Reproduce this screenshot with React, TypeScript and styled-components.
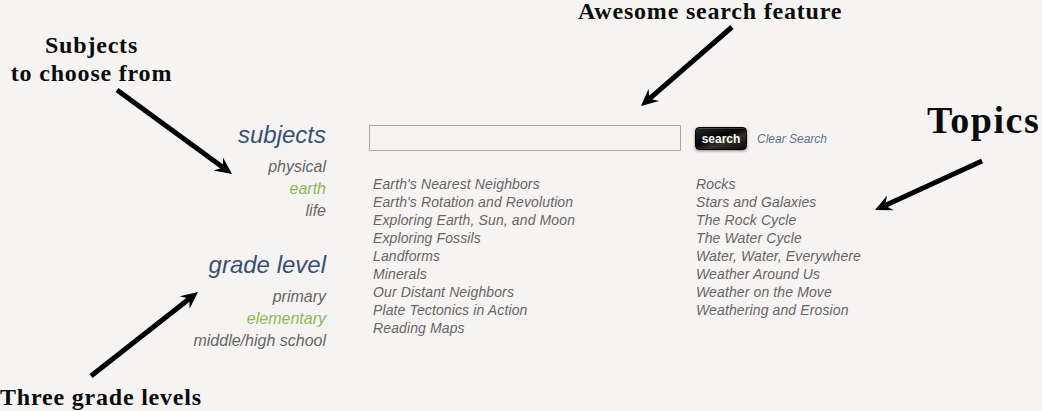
import React from "react";
import styled, { createGlobalStyle } from "styled-components";

const Global = createGlobalStyle`
  html, body { margin: 0; padding: 0; background: #f5f4f2; }
  body { width: 1042px; height: 411px; overflow: hidden; }
`;

const Page = styled.div`
  position: relative;
  width: 1042px;
  height: 411px;
  overflow: hidden;
  box-sizing: border-box;
  padding: 121px 0 0 126px;
  display: flex;
  gap: 43px;
  font-family: "Liberation Sans", Arial, sans-serif;
`;

const Sidebar = styled.nav`
  width: 200px;
  display: flex;
  flex-direction: column;
  align-items: flex-end;
`;

const Heading = styled.h2<{ $gap?: number }>`
  margin: ${(p) => p.$gap ?? 0}px 0 7px;
  font-size: 24px;
  line-height: 28px;
  font-style: italic;
  font-weight: normal;
  color: #3a5073;
`;

const FilterList = styled.ul`
  list-style: none;
  margin: 0;
  padding: 0;
  text-align: right;
`;

const FilterItem = styled.li<{ $active?: boolean }>`
  font-size: 16px;
  line-height: 22px;
  font-style: italic;
  color: ${(p) => (p.$active ? "#8cba55" : "#686565")};
`;

const Main = styled.main`
  padding-top: 4px;
  display: flex;
  flex-direction: column;
`;

const SearchRow = styled.div`
  display: flex;
  align-items: center;
  height: 26px;
`;

const SearchInput = styled.input`
  box-sizing: border-box;
  width: 312px;
  height: 26px;
  border: 1px solid #a8a7a5;
  background: transparent;
  margin: 0 14px 0 0;
  padding: 0 4px;
  outline: none;
`;

const SearchButton = styled.button`
  box-sizing: border-box;
  width: 52px;
  height: 23px;
  margin: 1px 10px 0 0;
  border: 1px solid #000;
  border-radius: 4px;
  background: linear-gradient(160deg, #262626 0%, #050505 45%, #34312e 62%, #0a0a0a 100%);
  box-shadow: 0 1px 3px rgba(0, 0, 0, 0.45), inset 0 1px 0 rgba(255, 255, 255, 0.18);
  color: #fff;
  font-family: "Liberation Sans", Arial, sans-serif;
  font-weight: bold;
  font-size: 12px;
  padding: 0;
  cursor: pointer;
`;

const ClearLink = styled.a`
  font-size: 12px;
  font-style: italic;
  color: #5d7291;
  text-decoration: none;
  margin-top: 1px;
`;

const TopicGrid = styled.div`
  margin-top: 24px;
  padding-left: 4px;
  display: grid;
  grid-template-columns: 323px auto;
`;

const TopicList = styled.ul`
  list-style: none;
  margin: 0;
  padding: 0;
`;

const Topic = styled.li`
  font-size: 14px;
  line-height: 18px;
  font-style: italic;
  letter-spacing: 0.12px;
  color: #6a6464;
  white-space: nowrap;
`;

const Note = styled.div<{ $size?: number; $spacing?: number }>`
  position: absolute;
  font-family: "Liberation Serif", "Times New Roman", serif;
  font-weight: bold;
  color: #0c0c0c;
  font-size: ${(p) => p.$size ?? 24}px;
  line-height: ${(p) => (p.$size ?? 24) + 4}px;
  letter-spacing: ${(p) => p.$spacing ?? 0.8}px;
  text-align: center;
  white-space: nowrap;
`;

const Overlay = styled.svg`
  position: absolute;
  left: 0;
  top: 0;
  pointer-events: none;
`;

type ArrowProps = { x1: number; y1: number; x2: number; y2: number };

const Arrow = ({ x1, y1, x2, y2 }: ArrowProps) => {
  const dx = x2 - x1;
  const dy = y2 - y1;
  const len = Math.hypot(dx, dy);
  const ux = dx / len;
  const uy = dy / len;
  const nx = -uy;
  const ny = ux;
  const head = 17;
  const half = 8;
  const notch = 11;
  const bx = x2 - ux * head;
  const by = y2 - uy * head;
  const mx = x2 - ux * notch;
  const my = y2 - uy * notch;
  const pts = [
    [x2, y2],
    [bx + nx * half, by + ny * half],
    [mx, my],
    [bx - nx * half, by - ny * half],
  ]
    .map((p) => p.map((v) => v.toFixed(1)).join(","))
    .join(" ");
  return (
    <g>
      <line x1={x1} y1={y1} x2={mx} y2={my} stroke="#000" strokeWidth={5} />
      <polygon points={pts} fill="#000" />
    </g>
  );
};

const subjects = [
  { label: "physical" },
  { label: "earth", active: true },
  { label: "life" },
];

const grades = [
  { label: "primary" },
  { label: "elementary", active: true },
  { label: "middle/high school" },
];

const topicsLeft = [
  "Earth's Nearest Neighbors",
  "Earth's Rotation and Revolution",
  "Exploring Earth, Sun, and Moon",
  "Exploring Fossils",
  "Landforms",
  "Minerals",
  "Our Distant Neighbors",
  "Plate Tectonics in Action",
  "Reading Maps",
];

const topicsRight = [
  "Rocks",
  "Stars and Galaxies",
  "The Rock Cycle",
  "The Water Cycle",
  "Water, Water, Everywhere",
  "Weather Around Us",
  "Weather on the Move",
  "Weathering and Erosion",
];

export default function App() {
  return (
    <>
      <Global />
      <Page>
        <Sidebar>
          <Heading>subjects</Heading>
          <FilterList>
            {subjects.map((s) => (
              <FilterItem key={s.label} $active={s.active}>
                {s.label}
              </FilterItem>
            ))}
          </FilterList>
          <Heading $gap={29}>grade level</Heading>
          <FilterList>
            {grades.map((s) => (
              <FilterItem key={s.label} $active={s.active}>
                {s.label}
              </FilterItem>
            ))}
          </FilterList>
        </Sidebar>
        <Main>
          <SearchRow>
            <SearchInput type="text" />
            <SearchButton>search</SearchButton>
            <ClearLink href="#">Clear Search</ClearLink>
          </SearchRow>
          <TopicGrid>
            <TopicList>
              {topicsLeft.map((t) => (
                <Topic key={t}>{t}</Topic>
              ))}
            </TopicList>
            <TopicList>
              {topicsRight.map((t) => (
                <Topic key={t}>{t}</Topic>
              ))}
            </TopicList>
          </TopicGrid>
        </Main>

        <Note style={{ left: 9, top: 31, width: 165 }}>
          Subjects
          <br />
          to choose from
        </Note>
        <Note $size={24} style={{ left: 578, top: 0, lineHeight: "22px" }}>
          Awesome search feature
        </Note>
        <Note $size={38} $spacing={1.5} style={{ left: 927, top: 99 }}>
          Topics
        </Note>
        <Note style={{ left: 0, top: 383 }}>Three grade levels</Note>

        <Overlay width={1042} height={411} viewBox="0 0 1042 411">
          <Arrow x1={117} y1={90} x2={232} y2={174} />
          <Arrow x1={732} y1={27} x2={641} y2={106} />
          <Arrow x1={982} y1={161} x2={875} y2={210} />
          <Arrow x1={91} y1={376} x2={198} y2={292} />
        </Overlay>
      </Page>
    </>
  );
}
